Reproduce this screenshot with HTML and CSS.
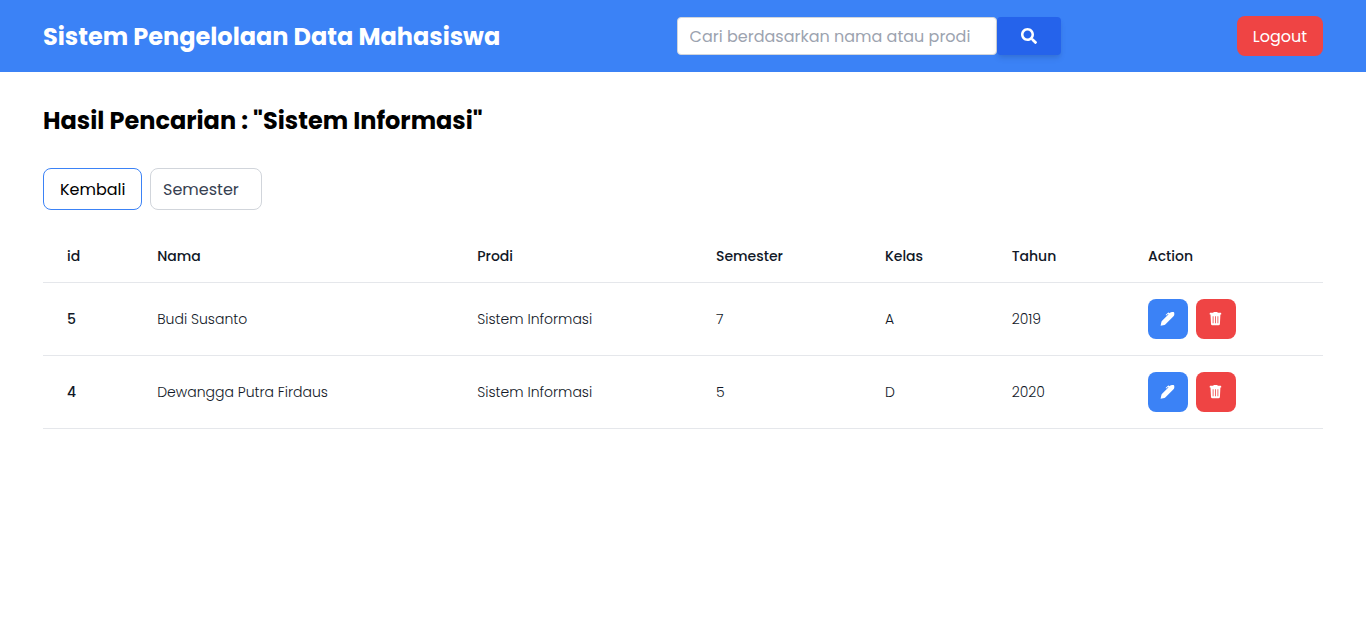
FILE: index.html
```html
<!DOCTYPE html>
<html lang="id">
<head>
<meta charset="utf-8">
<meta name="viewport" content="width=device-width, initial-scale=1">
<title>Sistem Pengelolaan Data Mahasiswa</title>
<link rel="stylesheet" href="styles.css">
</head>
<body>
<svg class="sprite" aria-hidden="true">
  <symbol id="pen" viewBox="0 0 16 16"><path d="M.6 14.7 1.400 10.900Q1.600 10.300 2.100 9.800L8.600 3.300 7.900 2.900 6.200 4.500 5.600 3.900 7.900 1.700Q8.500 1.300 9.100 1.700L9.600 2.200 10.300 1.500Q11 1 12 1H13.200Q14.300 1.100 14.300 2.200V3.500Q14.200 4.500 13.500 5.200L5.500 13.200Q5 13.700 4.400 13.900Z"/></symbol>
  <symbol id="trash" viewBox="0 0 16 16"><path fill-rule="evenodd" d="M5.800 1H9.200L9.800 1.800H12.700Q13.200 1.800 13.200 2.300V3.500H12.400L11.900 12.900Q11.800 14.200 10.500 14.200H4.400Q3.100 14.200 3 12.900L2.500 3.500H1.700V2.300Q1.700 1.800 2.200 1.800H5.200ZM4.700 5.200V12.300H5.500V5.200ZM7.100 5.200V12.300H7.900V5.200ZM9.500 5.200V12.300H10.300V5.200Z"/></symbol>
</svg>
<header class="topbar">
  <div class="container topbar-inner">
    <h1 class="title brand">Sistem Pengelolaan Data Mahasiswa</h1>
    <form class="search">
      <input class="search-input" type="text" aria-label="Cari mahasiswa" placeholder="Cari berdasarkan nama atau prodi">
      <button class="search-button" type="submit" aria-label="Cari">
        <svg class="search-icon" viewBox="0 0 512 512" aria-hidden="true"><path d="M505 442.700 405.300 343c-4.500-4.500-10.600-7-17-7H372c27.600-35.300 44-79.700 44-128C416 93.100 322.900 0 208 0S0 93.100 0 208s93.100 208 208 208c48.300 0 92.700-16.400 128-44v16.300c0 6.400 2.500 12.500 7 17l99.700 99.700c9.400 9.400 24.600 9.400 33.900 0l28.300-28.300c9.400-9.400 9.400-24.600.1-34zM208 336c-70.700 0-128-57.200-128-128 0-70.700 57.200-128 128-128 70.700 0 128 57.200 128 128 0 70.700-57.200 128-128 128z"/></svg>
      </button>
    </form>
    <button class="logout" type="button">Logout</button>
  </div>
</header>
<main class="container content">
  <h2 class="title">Hasil Pencarian : "Sistem Informasi"</h2>
  <div class="filters">
    <a class="back" href="#">Kembali</a>
    <select class="semester" aria-label="Semester"><option>Semester</option><option>5</option><option>7</option></select>
  </div>
  <table class="students">
    <colgroup><col class="col-id"><col class="col-name"><col class="col-program"><col class="col-semester"><col class="col-class"><col class="col-year"><col class="col-action"></colgroup>
    <thead>
      <tr><th scope="col">id</th><th scope="col">Nama</th><th scope="col">Prodi</th><th scope="col">Semester</th><th scope="col">Kelas</th><th scope="col">Tahun</th><th scope="col">Action</th></tr>
    </thead>
    <tbody>
      <tr>
        <th scope="row">5</th><td>Budi Susanto</td><td>Sistem Informasi</td><td>7</td><td>A</td><td>2019</td>
        <td><div class="actions"><button class="action edit" type="button" aria-label="Edit"><svg class="icon"><use href="#pen"/></svg></button><button class="action delete" type="button" aria-label="Hapus"><svg class="icon"><use href="#trash"/></svg></button></div></td>
      </tr>
      <tr>
        <th scope="row">4</th><td>Dewangga Putra Firdaus</td><td>Sistem Informasi</td><td>5</td><td>D</td><td>2020</td>
        <td><div class="actions"><button class="action edit" type="button" aria-label="Edit"><svg class="icon"><use href="#pen"/></svg></button><button class="action delete" type="button" aria-label="Hapus"><svg class="icon"><use href="#trash"/></svg></button></div></td>
      </tr>
    </tbody>
  </table>
</main>
</body>
</html>
```

FILE: styles.css
```css
* { box-sizing: border-box; }

body {
  margin: 0;
  background: #fff;
  color: #000;
  font: 400 16px/25px Poppins, Inter, sans-serif;
}

button, input, select { font: inherit; margin: 0; }
button { border: 0; padding: 0; cursor: pointer; }
svg { fill: currentColor; display: block; }
.sprite { position: absolute; width: 0; height: 0; }

.container { max-width: 1280px; margin: 0 auto; }

.topbar { background: #3b82f6; color: #fff; }
.topbar-inner {
  display: flex;
  align-items: center;
  justify-content: space-between;
  padding: 16px 0;
}

.title { margin: 0; font-size: 24px; line-height: 33px; font-weight: 700; }

.search { display: flex; width: 384px; }
.search-input {
  flex: 1;
  min-width: 0;
  height: 38px;
  padding: 6px 12px;
  border: 1px solid #d1d5db;
  border-radius: 4px;
  background: #fff;
  color: #374151;
  appearance: none;
}
.search-input::placeholder { color: #9ca3af; opacity: 1; }
.search-button {
  display: flex;
  align-items: center;
  justify-content: center;
  width: 64px;
  border-radius: 4px;
  background: #2563eb;
  color: #fff;
  box-shadow: 0 4px 6px -1px rgba(0, 0, 0, .1), 0 2px 4px -1px rgba(0, 0, 0, .06);
}
.search-icon { width: 16px; height: 16px; }

.logout {
  width: 86px;
  height: 40px;
  border-radius: 8px;
  background: #ef4444;
  color: #fff;
}

.content { padding-top: 32px; }

.filters { display: flex; gap: 8px; margin: 31px 0 20px; }
.back, .semester {
  height: 42px;
  border: 1px solid #d1d5db;
  border-radius: 8px;
  background: #fff;
}
.back {
  width: 99px;
  padding: 8px 16px;
  border-color: #3b82f6;
  color: #000;
  text-decoration: none;
}
.semester {
  width: 112px;
  padding: 8px 12px;
  color: #374151;
  appearance: none;
}

.students {
  width: 100%;
  table-layout: fixed;
  border-collapse: separate;
  border-spacing: 0;
  color: #111827;
  font-size: 14px;
  line-height: 20px;
  text-align: left;
}
.col-id { width: 7.05%; }
.col-name { width: 25%; }
.col-program { width: 18.65%; }
.col-semester { width: 13.2%; }
.col-class { width: 9.9%; }
.col-year { width: 10.65%; }
.col-action { width: 15.55%; }
.students th, .students td {
  padding: 16px 24px;
  border-bottom: 1px solid #e5e7eb;
  white-space: nowrap;
}
.students th { font-weight: 500; }
.students td { font-weight: 300; }

.actions { display: flex; gap: 8px; }
.action {
  display: flex;
  align-items: center;
  justify-content: center;
  width: 40px;
  height: 40px;
  border-radius: 8px;
  color: #fff;
}
.edit { background: #3b82f6; }
.delete { background: #ef4444; }
.icon { width: 16px; height: 16px; }
```
